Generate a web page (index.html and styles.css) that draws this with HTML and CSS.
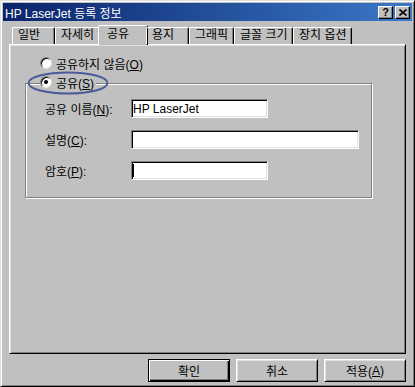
FILE: index.html
```html
<!DOCTYPE html>
<html lang="ko">

<head>
    <meta charset="UTF-8">
    <title>HP LaserJet 등록 정보</title>
    <link rel="stylesheet" href="styles.css">
</head>

<body>
    <div class="window">
        <div class="titlebar">
            <span class="title">HP LaserJet 등록 정보</span>
            <div class="titleButtons">
                <span class="tbtn">?</span>
                <span class="tbtn">
                    <svg width="8" height="7" viewBox="0 0 8 7">
                        <path d="M0.5 0.5 L7.5 6.5 M7.5 0.5 L0.5 6.5" stroke="#000" stroke-width="1.6" />
                    </svg>
                </span>
            </div>
        </div>

        <div class="tabs">
            <div class="tab">일반</div>
            <div class="tab">자세히</div>
            <div class="tab active">공유</div>
            <div class="tab">용지</div>
            <div class="tab">그래픽</div>
            <div class="tab">글꼴 크기</div>
            <div class="tab">장치 옵션</div>
        </div>

        <div class="panel">
            <div class="option">
                <span class="radio"></span>
                <span>공유하지 않음(<u>O</u>)</span>
            </div>

            <div class="group">
                <div class="option legend">
                    <span class="radio checked"></span>
                    <span>공유(<u>S</u>)</span>
                </div>

                <div class="fields">
                    <label>공유 이름(<u>N</u>):</label>
                    <div class="field short">HP LaserJet</div>

                    <label>설명(<u>C</u>):</label>
                    <div class="field long"></div>

                    <label>암호(<u>P</u>):</label>
                    <div class="field short"><span class="caret"></span></div>
                </div>
            </div>

            <!-- highlight around the share option -->
            <svg class="mark" width="84" height="26" viewBox="0 0 84 26">
                <ellipse cx="42" cy="13" rx="39.5" ry="10.5" fill="none" stroke="#4b5a98" stroke-width="2" />
            </svg>
        </div>

        <div class="buttons">
            <div class="btn default">확인</div>
            <div class="btn">취소</div>
            <div class="btn">적용(<u>A</u>)</div>
        </div>
    </div>
</body>

</html>
```

FILE: styles.css
```css
* {
    box-sizing: border-box;
}

body {
    margin: 0;
    background-color: #c0c0c0;
    font-family: "Liberation Sans", "Noto Sans CJK KR", sans-serif;
    font-size: 12px;
    color: #000;
}

.window {
    width: 415px;
    height: 387px;
    display: flex;
    flex-direction: column;
    padding: 2px 2px 4px 2px;
    border: 1px solid;
    border-color: #dfdfdf #000 #000 #dfdfdf;
    box-shadow: inset 1px 1px #fff, inset -1px -1px #808080;
}

.titlebar {
    height: 18px;
    display: flex;
    align-items: center;
    justify-content: space-between;
    padding: 0 2px;
    background: linear-gradient(90deg, #0a246a, #3b78c8);
    color: #fff;
}

.titleButtons {
    display: flex;
    gap: 2px;
}

.tbtn {
    width: 15px;
    height: 13px;
    display: flex;
    align-items: center;
    justify-content: center;
    background-color: #c0c0c0;
    border: 1px solid;
    border-color: #fff #000 #000 #fff;
    box-shadow: inset -1px -1px #808080;
    color: #000;
    font-weight: bold;
    font-size: 11px;
    line-height: 11px;
}

.tabs {
    height: 19px;
    margin: 4px 0 0 9px;
    display: flex;
    align-items: flex-end;
    position: relative;
    z-index: 1;
}

.tab {
    height: 17px;
    width: 43px;
    padding-left: 5px;
    border: 1px solid;
    border-bottom: 0;
    border-color: #fff #000 transparent #fff;
    border-radius: 2px 2px 0 0;
    box-shadow: inset -1px 0 #808080;
    line-height: 15px;
    white-space: nowrap;
}

/* tab widths follow the label lengths */
.tab:nth-child(2),
.tab:nth-child(5) {
    width: 45px;
}

.tab:nth-child(6),
.tab:nth-child(7) {
    width: 59px;
}

.tab.active {
    width: 50px;
    height: 20px;
    margin: 0 -2px -1px -2px;
    padding-left: 8px;
    background-color: #c0c0c0;
    line-height: 16px;
}

.panel {
    flex: 1;
    margin: 0 6px;
    padding: 11px 33px 0 15px;
    border: 1px solid;
    border-color: #fff #000 #000 #fff;
    box-shadow: inset 1px 1px #dfdfdf, inset -1px -1px #808080;
    position: relative;
}

.option {
    height: 14px;
    margin-left: 15px;
    display: flex;
    align-items: center;
    gap: 4px;
    white-space: nowrap;
}

.radio {
    width: 12px;
    height: 12px;
    display: flex;
    align-items: center;
    justify-content: center;
    border-radius: 50%;
    background-color: #fff;
    border: 1px solid;
    border-color: #808080 #dfdfdf #dfdfdf #808080;
    box-shadow: inset 1px 1px #000;
}

.radio.checked::after {
    content: "";
    width: 4px;
    height: 4px;
    border-radius: 50%;
    background-color: #000;
}

.group {
    margin-top: 13px;
    padding: 0 0 17px 19px;
    border: 1px solid #808080;
    box-shadow: inset 1px 1px #fff, 1px 1px #fff;
}

.legend {
    width: fit-content;
    margin: -9px 0 0 -5px;
    padding-right: 2px;
    background-color: #c0c0c0;
}

.fields {
    margin-top: 10px;
    display: grid;
    grid-template-columns: 86px max-content;
    row-gap: 12px;
    align-items: center;
}

.field {
    height: 19px;
    padding-left: 1px;
    display: flex;
    align-items: center;
    background-color: #fff;
    border: 1px solid;
    border-color: #808080 #fff #fff #808080;
    box-shadow: inset 1px 1px #000, inset -1px -1px #dfdfdf;
}

.field.short {
    width: 137px;
}

.field.long {
    width: 228px;
}

.caret {
    width: 1px;
    height: 13px;
    background-color: #000;
}

.mark {
    position: absolute;
    left: 16px;
    top: 25px;
}

.buttons {
    height: 23px;
    margin: 5px 6px 0 0;
    display: flex;
    justify-content: flex-end;
    gap: 6px;
}

.btn {
    width: 82px;
    height: 23px;
    display: flex;
    align-items: center;
    justify-content: center;
    border: 1px solid;
    border-color: #fff #000 #000 #fff;
    box-shadow: inset 1px 1px #dfdfdf, inset -1px -1px #808080;
}

.btn.default {
    border-color: #000;
    box-shadow: inset 1px 1px #fff, inset -1px -1px #000, inset -2px -2px #808080;
}
```
